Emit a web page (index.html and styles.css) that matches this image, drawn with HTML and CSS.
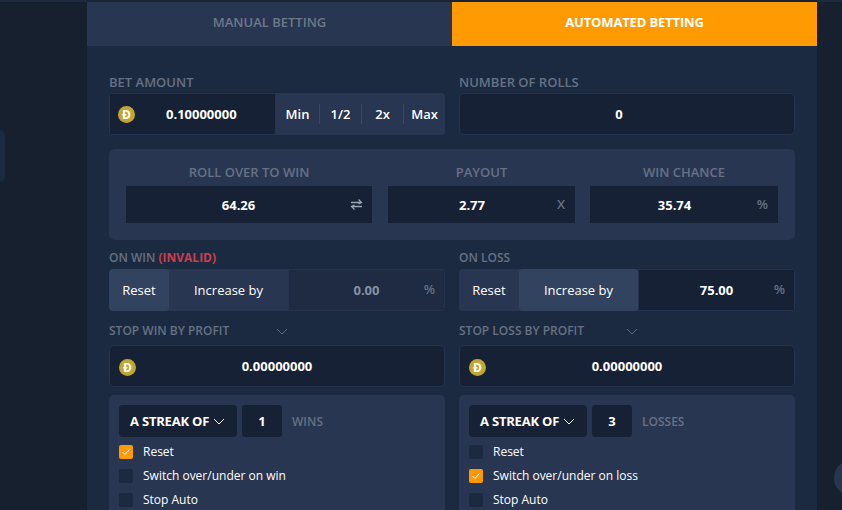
FILE: index.html
```html
<!DOCTYPE html>
<html lang="en">
<head>
<meta charset="utf-8">
<title>Automated betting</title>
<link rel="stylesheet" href="styles.css">
</head>
<body>
<div class="side-tab"></div>
<div class="side-round"></div>
<main class="panel">
  <nav class="tabs">
    <div class="tab">MANUAL BETTING</div>
    <div class="tab tab-active">AUTOMATED BETTING</div>
  </nav>
  <div class="content">
    <div class="two first-row">
      <div>
        <div class="label">BET AMOUNT</div>
        <div class="bet">
          <div class="bet-input">
            <span class="coin">Ð</span>
            <span class="val bet-val">0.10000000</span>
          </div>
          <div class="quick"><span>Min</span><span>1/2</span><span>2x</span><span>Max</span></div>
        </div>
      </div>
      <div>
        <div class="label">NUMBER OF ROLLS</div>
        <div class="field field-off"><span class="val">0</span></div>
      </div>
    </div>

    <section class="roll">
      <div class="roll-col col-a">
        <div class="label-c">ROLL OVER TO WIN</div>
        <div class="roll-input roll-input-wide"><span class="val">64.26</span>
          <svg class="swap" width="13" height="13" viewBox="0 0 13 13" fill="none" stroke="#97a5b3" stroke-width="1.3"><path d="M1 4.5h10M8.5 1.5l3 3-3 1.5M12 8.5H2M4.5 7l-3 1.5 3 3"/></svg>
        </div>
      </div>
      <div class="roll-col col-b">
        <div class="label-c">PAYOUT</div>
        <div class="roll-input"><span class="val">2.77</span><span class="suffix">X</span></div>
      </div>
      <div class="roll-col col-c">
        <div class="label-c">WIN CHANCE</div>
        <div class="roll-input"><span class="val">35.74</span><span class="suffix">%</span></div>
      </div>
    </section>

    <div class="two">
      <div>
        <div class="label label-small">ON WIN <span class="invalid">(INVALID)</span></div>
        <div class="seg">
          <div class="seg-btn seg-reset seg-on">Reset</div>
          <div class="seg-btn seg-inc">Increase by</div>
          <div class="seg-input seg-input-off"><span class="val val-off">0.00</span><span class="suffix">%</span></div>
        </div>
        <div class="label stop-label"><span class="stop-text">STOP WIN BY PROFIT</span><svg width="12" height="7" viewBox="0 0 12 7" fill="none" stroke="#5c6980" stroke-width="1"><path d="M1 1l5 5 5-5"/></svg></div>
        <div class="field field-coin"><span class="coin coin-abs">Ð</span><span class="val">0.00000000</span></div>
        <div class="streak">
          <div class="streak-row">
            <div class="select"><span class="select-text">A STREAK OF</span><svg width="12" height="7" viewBox="0 0 12 7" fill="none" stroke="#fff" stroke-width="1"><path d="M1 1l5 5 5-5"/></svg></div>
            <div class="count">1</div>
            <div class="unit">WINS</div>
          </div>
          <div class="check"><span class="box box-on"><svg width="10" height="8" viewBox="0 0 10 8" fill="none" stroke="#fff" stroke-width="1"><path d="M1.5 4l2.5 2.5L8.5 1.5"/></svg></span>Reset</div>
          <div class="check"><span class="box"></span>Switch over/under on win</div>
          <div class="check"><span class="box"></span>Stop Auto</div>
        </div>
      </div>
      <div>
        <div class="label label-small">ON LOSS</div>
        <div class="seg">
          <div class="seg-btn seg-reset">Reset</div>
          <div class="seg-btn seg-inc seg-on">Increase by</div>
          <div class="seg-input"><span class="val">75.00</span><span class="suffix">%</span></div>
        </div>
        <div class="label stop-label"><span class="stop-text">STOP LOSS BY PROFIT</span><svg width="12" height="7" viewBox="0 0 12 7" fill="none" stroke="#5c6980" stroke-width="1"><path d="M1 1l5 5 5-5"/></svg></div>
        <div class="field field-coin"><span class="coin coin-abs">Ð</span><span class="val">0.00000000</span></div>
        <div class="streak">
          <div class="streak-row">
            <div class="select"><span class="select-text">A STREAK OF</span><svg width="12" height="7" viewBox="0 0 12 7" fill="none" stroke="#fff" stroke-width="1"><path d="M1 1l5 5 5-5"/></svg></div>
            <div class="count">3</div>
            <div class="unit">LOSSES</div>
          </div>
          <div class="check"><span class="box"></span>Reset</div>
          <div class="check"><span class="box box-on"><svg width="10" height="8" viewBox="0 0 10 8" fill="none" stroke="#fff" stroke-width="1"><path d="M1.5 4l2.5 2.5L8.5 1.5"/></svg></span>Switch over/under on loss</div>
          <div class="check"><span class="box"></span>Stop Auto</div>
        </div>
      </div>
    </div>
  </div>
</main>
</body>
</html>
```
FILE: styles.css
```css
* { box-sizing: border-box; }
html, body { margin: 0; height: 510px; overflow: hidden; }
body {
  background: #17202f;
  font-family: "Open Sans", sans-serif;
  font-size: 13px;
  color: #fff;
  position: relative;
}
body::before {
  content: "";
  position: absolute;
  left: 0; right: 0; top: 0; height: 2px;
  background: #1e2a3e;
}
.side-tab {
  position: absolute;
  left: 0; top: 130px;
  width: 5px; height: 52px;
  background: #1c2a41;
  border-radius: 0 5px 5px 0;
}
.side-round {
  position: absolute;
  left: 834px; top: 460px;
  width: 36px; height: 36px;
  border-radius: 50%;
  background: #27354f;
}
.panel {
  position: relative;
  margin-left: 87px;
  width: 730px;
  height: 510px;
  background: #1c2a41;
  border-top: 2px solid #1a2333;
  overflow: hidden;
}
.tabs { display: flex; height: 44px; }
.tab {
  flex: 0 0 365px;
  display: flex;
  align-items: center;
  justify-content: center;
  background: #293652;
  color: #6d7889;
  font-size: 13px;
  font-weight: 600;
  padding-bottom: 5px;
}
.tab-active {
  background: #ff9a03;
  color: #fff;
  font-weight: 700;
  letter-spacing: -0.15px;
}
.content { padding: 28px 22px 0; }
.two { display: grid; grid-template-columns: 336px 336px; column-gap: 14px; }
.first-row { margin-bottom: 14px; }
.label {
  height: 19px;
  line-height: 16px;
  color: #667183;
  font-weight: 600;
  font-size: 13px;
}
.label-small { height: 20px; line-height: 18px; font-size: 12px; }
.invalid { color: #c8404f; font-weight: 700; }
.val { font-weight: 700; font-size: 13px; color: #fff; }
.field {
  height: 42px;
  background: #172135;
  border: 1px solid #26334e;
  border-radius: 5px;
  display: flex;
  align-items: center;
  justify-content: center;
  position: relative;
}
.field-off { padding-right: 16px; }
.bet {
  display: flex;
  height: 42px;
  background: #293652;
  border-radius: 4px;
  overflow: hidden;
}
.bet-input {
  width: 167px;
  flex: none;
  background: #172135;
  border: 1px solid #26334e;
  display: flex;
  align-items: center;
  padding-left: 8px;
}
.bet-val { margin-left: 31px; }
.coin {
  width: 17px; height: 17px;
  flex: none;
  border-radius: 50%;
  background: #c2a633;
  color: #fff;
  font-size: 12px;
  font-weight: 700;
  line-height: 17px;
  text-align: center;
}
.coin-abs { position: absolute; left: 9px; top: 13px; }
.quick { flex: 1; display: flex; align-items: center; }
.quick span {
  flex: 1;
  text-align: center;
  font-weight: 600;
  font-size: 13px;
  line-height: 20px;
  border-left: 1px solid #3a4866;
}
.quick span:first-child { flex: 0 0 43px; border-left: 0; }
.roll {
  height: 91px;
  background: #293652;
  border-radius: 6px;
  display: flex;
  padding: 14px 17px 0;
  margin-bottom: 9px;
}
.roll-col { flex: none; }
.col-a { width: 246px; margin-right: 16px; }
.col-b { width: 187px; margin-right: 15px; }
.col-c { width: 188px; }
.label-c {
  height: 23px;
  line-height: 18px;
  color: #667183;
  font-weight: 600;
  font-size: 13px;
  text-align: center;
}
.roll-input {
  height: 37px;
  background: #172135;
  display: flex;
  align-items: center;
  justify-content: center;
  position: relative;
  padding-right: 19px;
}
.roll-input-wide { padding-right: 21px; }
.swap { position: absolute; right: 9px; top: 12px; }
.suffix {
  position: absolute;
  right: 10px;
  top: 50%;
  transform: translateY(-58%);
  color: #667183;
  font-size: 13px;
  font-weight: 600;
}
.seg {
  display: flex;
  height: 42px;
  background: #293652;
  border-radius: 4px;
  overflow: hidden;
}
.seg-btn {
  display: flex;
  align-items: center;
  justify-content: center;
  font-size: 13px;
  color: #fff;
  border-radius: 4px;
}
.seg-reset { width: 60px; }
.seg-inc { width: 119px; }
.seg-on { background: #32435f; }
.seg-input {
  flex: 1;
  background: #172135;
  border: 1px solid #26334e;
  display: flex;
  align-items: center;
  justify-content: center;
  position: relative;
}
.seg-input .suffix { right: 9px; }
.seg-input-off { background: #1e2b43; }
.val-off { color: #8792a4; }
.stop-label {
  margin-top: 9px;
  height: 25px;
  font-size: 12px;
  display: flex;
  align-items: center;
  padding-bottom: 3px;
}
.stop-text { width: 167px; flex: none; }
.field-coin { margin-bottom: 8px; }
.streak {
  height: 130px;
  background: #293652;
  border-radius: 5px;
  padding: 10px;
}
.streak-row { display: flex; align-items: center; height: 32px; margin-bottom: 8px; }
.select {
  width: 118px;
  height: 32px;
  background: #172135;
  border-radius: 4px;
  display: flex;
  align-items: center;
  padding-left: 11px;
  gap: 4px;
  font-weight: 700;
  font-size: 13px;
}
.select-text { letter-spacing: -0.2px; }
.count {
  width: 40px;
  height: 32px;
  margin-left: 5px;
  background: #172135;
  border-radius: 3px;
  display: flex;
  align-items: center;
  justify-content: center;
  font-weight: 700;
}
.unit { margin-left: 10px; color: #667183; font-weight: 600; font-size: 12px; }
.check {
  display: flex;
  align-items: center;
  height: 14px;
  margin-bottom: 10px;
  font-size: 12px;
  line-height: 14px;
}
.box {
  width: 14px; height: 14px;
  margin-right: 10px;
  flex: none;
  background: #1c2a41;
  border-radius: 2px;
  display: flex;
  align-items: center;
  justify-content: center;
}
.box-on { background: #ff9a03; }
```
